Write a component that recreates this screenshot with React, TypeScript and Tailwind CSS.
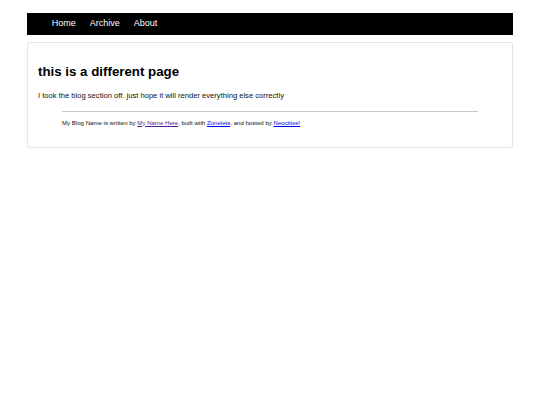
import React from "react";

const navLinks = ["Home", "Archive", "About"];

const App: React.FC = () => {
  return (
    <div className="min-h-[405px] bg-white font-['Liberation_Sans',Arial,sans-serif] text-black">
      <div className="mx-[27px] pt-[12.5px]">
        <nav className="flex h-[22.5px] items-center gap-[14px] bg-black pl-[24.7px] text-[9px] text-white">
          {navLinks.map((l) => (
            <a key={l} href="#" className="leading-none">
              {l}
            </a>
          ))}
        </nav>

        <main className="mt-[7px] rounded-[2px] border border-[#e6e6e6] px-[10px] pt-[21px] pb-[21.5px]">
          <h1 className="text-[13.3px] font-bold leading-[1.15]">this is a different page</h1>
          <p className="mt-[13px] text-[7.6px] leading-[1.15] text-[#111]">
            I took the blog section off. just hope it will render everything else correctly
          </p>

          {/* footer */}
          <footer className="mx-[24px] mt-[9.5px]">
            <hr className="border-t border-[#c8c8c8]" />
            <p className="mt-[7px] text-[6.08px] leading-[1.15] text-[#111]">
              My Blog Name is written by{" "}
              <a href="#" className="text-[#551a8b] underline">My Name Here</a>, built with{" "}
              <a href="#" className="text-[#0000ee] underline">Zonelets</a>, and hosted by{" "}
              <a href="#" className="text-[#0000ee] underline">Neocities!</a>
            </p>
          </footer>
        </main>
      </div>
    </div>
  );
};

export default App;
